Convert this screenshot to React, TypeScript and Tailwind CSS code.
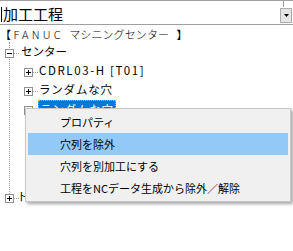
import { ReactNode } from "react";

const Expander = ({ open }: { open?: boolean }) => (
  <svg width="9" height="9" viewBox="0 0 9 9" className="relative shrink-0">
    <rect x="0.5" y="0.5" width="8" height="8" fill="#fff" stroke="#919191" />
    <path d="M2 4.5h5" stroke="#000" />
    {!open && <path d="M4.5 2v5" stroke="#000" />}
  </svg>
);

const Dots = () => <div className="h-0 w-[5px] border-t border-dotted border-[#a0a0a0]" />;

const RootRow = ({ open, last, children }: { open?: boolean; last?: boolean; children: ReactNode }) => (
  <div className="flex h-[19px] items-center">
    <div className="-ml-[5px] mt-[4px] flex items-center">
      <Expander open={open} />
      <Dots />
    </div>
    <span className={`${last ? "-ml-[2px]" : "ml-[2px]"} whitespace-nowrap`}>{children}</span>
  </div>
);

const ChildRow = ({ selected, children }: { selected?: boolean; children: ReactNode }) => (
  <div className="flex h-[19px] items-center">
    <div className="ml-[14px] mt-[4px] flex items-center">
      <Expander />
      <Dots />
    </div>
    {selected ? (
      <span className="ml-0 h-[18px] whitespace-nowrap border border-dotted border-[#f5a340] bg-[#0078d7] px-px leading-[16px] tracking-[0.8px] text-white">
        {children}
      </span>
    ) : (
      <span className="ml-[1px] whitespace-nowrap">{children}</span>
    )}
  </div>
);

const menuItems = ["プロパティ", "穴列を除外", "穴列を別加工にする", "工程をNCデータ生成から除外／解除"];

export default function App() {
  return (
    <div className="relative h-[251px] w-[293px] overflow-hidden bg-white font-['Noto_Sans_CJK_JP',sans-serif] text-black">
      {/* frame of the pane above */}
      <div className="flex h-[7px] border-t border-[#a0a0a0]">
        <div className="ml-auto mr-[9px] h-full w-px bg-[#a0a0a0]" />
      </div>

      {/* process combo */}
      <div className="flex h-[18px] items-start border-b border-[#a0a0a0]">
        <div className="ml-px h-[15px] w-px bg-black" />
        <span className="ml-[1px] -mt-[2px] text-[15px] leading-[18px]">加工工程</span>
        <div className="ml-auto mr-px mt-px flex h-[15px] w-[12px] items-center justify-center border border-[#adadad] bg-[#e5e5e5]">
          <svg width="5" height="3" viewBox="0 0 5 3">
            <path d="M0 0h5L2.5 3z" fill="#000" />
          </svg>
        </div>
      </div>

      {/* machine header */}
      <div className="h-[17px] whitespace-nowrap pt-px text-[11px] font-light leading-[17px]">
        <span>【</span> <span className="tracking-[3.2px]">FANUC</span>{" "}
        <span className="ml-[3px] tracking-[0.1px]">マシニングセンター</span> <span className="ml-[5px]">】</span>
      </div>

      {/* tree */}
      <div className="text-[11.5px]">
        <div className="ml-[9px] border-l border-dotted border-[#a0a0a0]">
          <RootRow open>センター</RootRow>
          <ChildRow>
            <span className="tracking-[1.6px]">CDRL03-H [T01]</span>
          </ChildRow>
          <ChildRow>
            <span className="tracking-[0.8px]">ランダムな穴</span>
          </ChildRow>
          <ChildRow selected>ランダムな穴</ChildRow>
          <div className="h-[76px]" />
        </div>
        <div className="-mt-[7px] ml-[10px]">
          <RootRow last>トップ</RootRow>
        </div>
      </div>

      {/* context menu */}
      <div className="absolute left-[25px] top-[108px] flex h-[94px] w-[266px] flex-col border border-[#c8c8c8] bg-[#f0f0f0] px-[2px] pt-[2px] text-[11px] shadow-[2px_2px_3px_rgba(0,0,0,0.35)]">
        {menuItems.map((item, i) => (
          <div
            key={item}
            className={`flex h-[22px] items-center whitespace-nowrap pl-[32px] ${i === 1 ? "bg-[#91c9f7]" : ""}`}
          >
            {item}
          </div>
        ))}
      </div>
    </div>
  );
}
